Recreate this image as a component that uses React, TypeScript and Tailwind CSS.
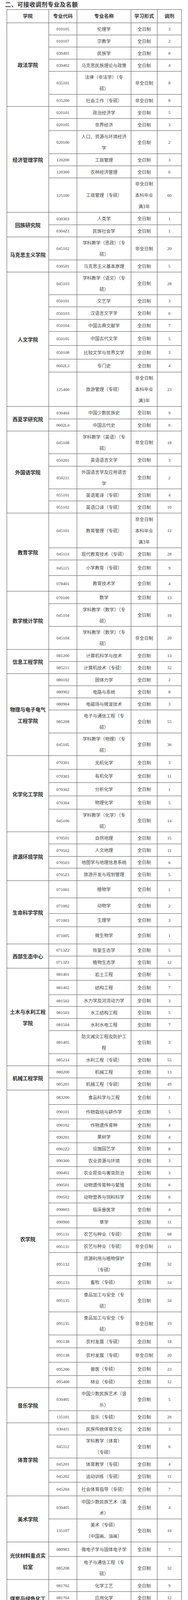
import React from "react";

const H: Record<string, string> = {
  "30": "h-[29px]",
  "31": "h-[30px]",
  "32": "h-[31px]",
  "33": "h-[32px]",
  "34": "h-[33px]",
  "35": "h-[34px]",
  "36": "h-[35px]",
  "37": "h-[36px]",
  "40": "h-[39px]",
  "44": "h-[43px]",
  "58": "h-[57px]",
  "59": "h-[58px]",
  "88": "h-[87px]",
  "89": "h-[88px]",
};

const SPAN: Record<number, string> = {
  1: "row-span-1",
  2: "row-span-2",
  3: "row-span-3",
  4: "row-span-4",
  5: "row-span-5",
  6: "row-span-6",
  7: "row-span-7",
  8: "row-span-8",
  21: "row-span-21",
};

const DATA = `
#政法学院
010105,伦理学,全日制,3,31
010107,宗教学,全日制,2,31
030401,民族学,全日制,6,31
030402,马克思民族理论与政策,全日制,4,31
035101,法律（非法学）（专|硕）,非全日制,8,59
035200,社会工作（专硕）,非全日制,8,31
#经济管理学院
020101,政治经济学,全日制,5,31
020105,世界经济,全日制,3,31
020106,人口、资源与环境经济|学,全日制,2,59
120200,工商管理,全日制,3,31
120300,农林经济管理,全日制,6,31
125100,工商管理（专硕）,非全日制|本科毕业|满3年,60,88
#回族研究院
030303,人类学,全日制,1,32
0304Z1,民族社会学,全日制,1,31
#马克思主义学院
045102,学科教学（思政）（专|硕）,非全日制,20,59
030501,马克思主义基本原理,全日制,5,31
#人文学院
045103,学科教学（语文）（专|硕）,全日制,28,58
050101,文艺学,全日制,3,31
050103,汉语言文字学,全日制,6,32
050104,中国古典文献学,全日制,7,31
050105,中国古代文学,全日制,5,36
050108,比较文学与世界文学,全日制,3,35
0602L3,专门史,全日制,4,33
125400,旅游管理（专硕）,非全日制|本科毕业|满3年,23,88
#西夏学研究院
030404,中国少数民族史,全日制,9,32
0602L4,中国古代史,全日制,6,31
#外国语学院
045108,学科教学（英语）（专|硕）,非全日制,18,58
050201,英语语言文学,全日制,3,32
050211,外国语言学及应用语言|学,全日制,2,58
055101,英语笔译（专硕）,全日制,4,31
055102,英语口译（专硕）,全日制,10,31
#教育学院
045101,教育管理（专硕）,非全日制|本科毕业|满3年,12,89
045114,现代教育技术（专硕）,全日制,28,31
045115,小学教育（专硕）,全日制,9,40
078401,教育技术学,全日制,4,40
#数学统计学院
070100,数学,全日制,13,32
045104,学科教学（数学）（专|硕）,全日制,16,58
045104,学科教学（数学）（专|硕）,非全日制,20,59
#信息工程学院
081200,计算机科学与技术,全日制,13,31
085211,计算机技术（专硕）,全日制,32,31
#物理与电子电气|工程学院
080102,固体力学,全日制,2,31
080902,电路与系统,全日制,8,31
080904,电磁场与微波技术,全日制,3,31
085208,电子与通信工程（专|硕）,全日制,55,59
045105,学科教学（物理）（专|硕）,全日制,36,58
#化学化工学院
070301,无机化学,全日制,3,35
070303,有机化学,全日制,11,34
070302,分析化学,全日制,1,34
070304,物理化学,全日制,5,34
045106,学科教学（化学）（专|硕）,全日制,14,58
#资源环境学院
070501,自然地理,全日制,15,31
070502,人文地理,全日制,11,32
070503,地图学与地理信息系统,全日制,6,30
0705Z1,旅游开发与规划管理,全日制,5,32
#生命科学学院
071001,植物学,全日制,1,44
071002,动物学,全日制,2,40
071003,生理学,全日制,3,34
071005,微生物学,全日制,1,44
#西部生态中心
0713Z2,恢复生态学,全日制,5,31
0713Z1,植物生态学,全日制,12,31
#土木与水利工程|学院
081401,岩土工程,全日制,5,31
081402,结构工程,全日制,7,37
081502,水力学及河流动力学,全日制,3,30
081503,水工结构工程,全日制,5,31
081504,水利水电工程,全日制,7,31
081405,防灾减灾工程及防护工|程,全日制,3,59
085214,水利工程（专硕）,全日制,55,31
#机械工程学院
080200,机械工程,全日制,13,31
085201,机械工程（专硕）,全日制,49,31
#农学院
083200,食品科学与工程,全日制,1,37
090101,作物栽培与耕作学,全日制,5,37
090102,作物遗传育种,全日制,4,31
090201,果树学,全日制,4,30
0902Z2,设施园艺学,全日制,8,30
090300,农业资源与环境,全日制,3,31
090402,农业昆虫与害虫防治,全日制,3,31
090501,动物遗传育种与繁殖,全日制,6,31
090502,动物营养与饲料科学,全日制,6,31
090603,临床兽医学,全日制,4,33
090900,草学,全日制,11,31
095131,农艺与种业（专硕）,全日制,68,31
095131,农艺与种业（专硕）,非全日制,11,32
095132,资源利用与植物保护|（专硕）,全日制,32,59
095133,畜牧（专硕）,全日制,34,34
095135,食品加工与安全（专|硕）,全日制,34,59
095135,食品加工与安全（专|硕）,非全日制,19,59
095138,农村发展（专硕）,全日制,18,33
095138,农村发展（专硕）,非全日制,20,37
095200,兽医（专硕）,全日制,23,34
095400,林业（专硕）,全日制,12,31
#音乐学院
030405,中国少数民族艺术（音|乐）,全日制,5,59
135101,音乐（专硕）,全日制,26,31
#体育学院
0304J1,民族传统体育文化,全日制,3,31
045112,学科教学（体育）|（专硕）,全日制,6,59
045201,体育教学（专硕）,全日制,4,31
045202,运动训练（专硕）,全日制,11,31
045204,社会体育指导（专硕）,全日制,7,35
#美术学院
030405,中国少数民族艺术（美|术）,全日制,4,59
135107,美术（专硕）|（中国画、油画）,全日制,16,59
#光伏材料重点实|验室
080903,微电子学与固体电子学,全日制,7,37
085208,电子与通信工程（专|硕）,全日制,32,59
#煤炭与绿色化工|国重实验室
081702,化学工艺,全日制,9,31
081704,应用化学,全日制,12,31
085216,化学工程（专硕）,全日制,74,31
085216,化学工程（专硕）,非全日制,20,31
#新闻传播学院
055200,新闻与传播（专硕）,非全日制,18,31
`;

type Row = { code: string; name: string[]; form: string[]; num: string; h: string };
type Group = { label: string[]; rows: Row[] };

function parse(): Group[] {
  const groups: Group[] = [];
  for (const raw of DATA.split("\n")) {
    const line = raw.trim();
    if (!line) continue;
    if (line.startsWith("#")) {
      groups.push({ label: line.slice(1).split("|"), rows: [] });
    } else {
      const [code, name, form, num, h] = line.split(",");
      groups[groups.length - 1].rows.push({
        code,
        name: name.split("|"),
        form: form.split("|"),
        num,
        h,
      });
    }
  }
  return groups;
}

const GROUPS = parse();

function Lines({ lines }: { lines: string[] }) {
  return (
    <>
      {lines.map((l, i) => (
        <div key={i} className="leading-[29px] whitespace-nowrap">
          {l}
        </div>
      ))}
    </>
  );
}

const cell =
  "bg-white flex flex-col items-center justify-center text-center overflow-hidden min-h-0";

export default function App() {
  return (
    <div className="w-[480px] bg-white pb-[3px] font-['Noto_Sans_CJK_SC',sans-serif]">
      <div className="h-[24px] pl-[13px] text-[15px] leading-[21px] font-bold text-[#333] tracking-[0.5px]">
        二、可接收调剂专业及名额
      </div>
      <div className="ml-[17px] w-[447px] grid grid-cols-[106px_71px_137px_66px_61px] gap-px p-px bg-[#525252]">
        {/* header */}
        <div className={`${cell} h-[33px] text-[12.5px] font-bold text-[#333]`}>学院</div>
        <div className={`${cell} h-[33px] text-[12.5px] font-bold text-[#333]`}>专业代码</div>
        <div className={`${cell} h-[33px] text-[12.5px] font-bold text-[#333]`}>专业名称</div>
        <div className={`${cell} h-[33px] text-[12.5px] font-bold text-[#333]`}>学习形式</div>
        <div className={`${cell} h-[33px] text-[12.5px] font-bold text-[#333]`}>调剂</div>
        {GROUPS.map((g, gi) => (
          <React.Fragment key={gi}>
            {g.rows.map((r, ri) => (
              <React.Fragment key={ri}>
                {ri === 0 && (
                  <div
                    className={`${cell} ${SPAN[g.rows.length]} text-[13px] font-bold text-[#2e2e2e]`}
                  >
                    <Lines lines={g.label} />
                  </div>
                )}
                <div
                  className={`${cell} ${H[r.h]} font-['Liberation_Serif','Noto_Sans_CJK_SC',serif] text-[11px] leading-[16px] text-[#3a3a3a]`}
                >
                  {r.code}
                </div>
                <div className={`${cell} ${H[r.h]} text-[11.5px] text-[#4a4a4a]`}>
                  <Lines lines={r.name} />
                </div>
                <div className={`${cell} ${H[r.h]} text-[11.5px] text-[#4a4a4a]`}>
                  <Lines lines={r.form} />
                </div>
                <div
                  className={`${cell} ${H[r.h]} font-['Liberation_Serif',serif] text-[11px] leading-[16px] text-[#3a3a3a]`}
                >
                  {r.num}
                </div>
              </React.Fragment>
            ))}
          </React.Fragment>
        ))}
      </div>
    </div>
  );
}
